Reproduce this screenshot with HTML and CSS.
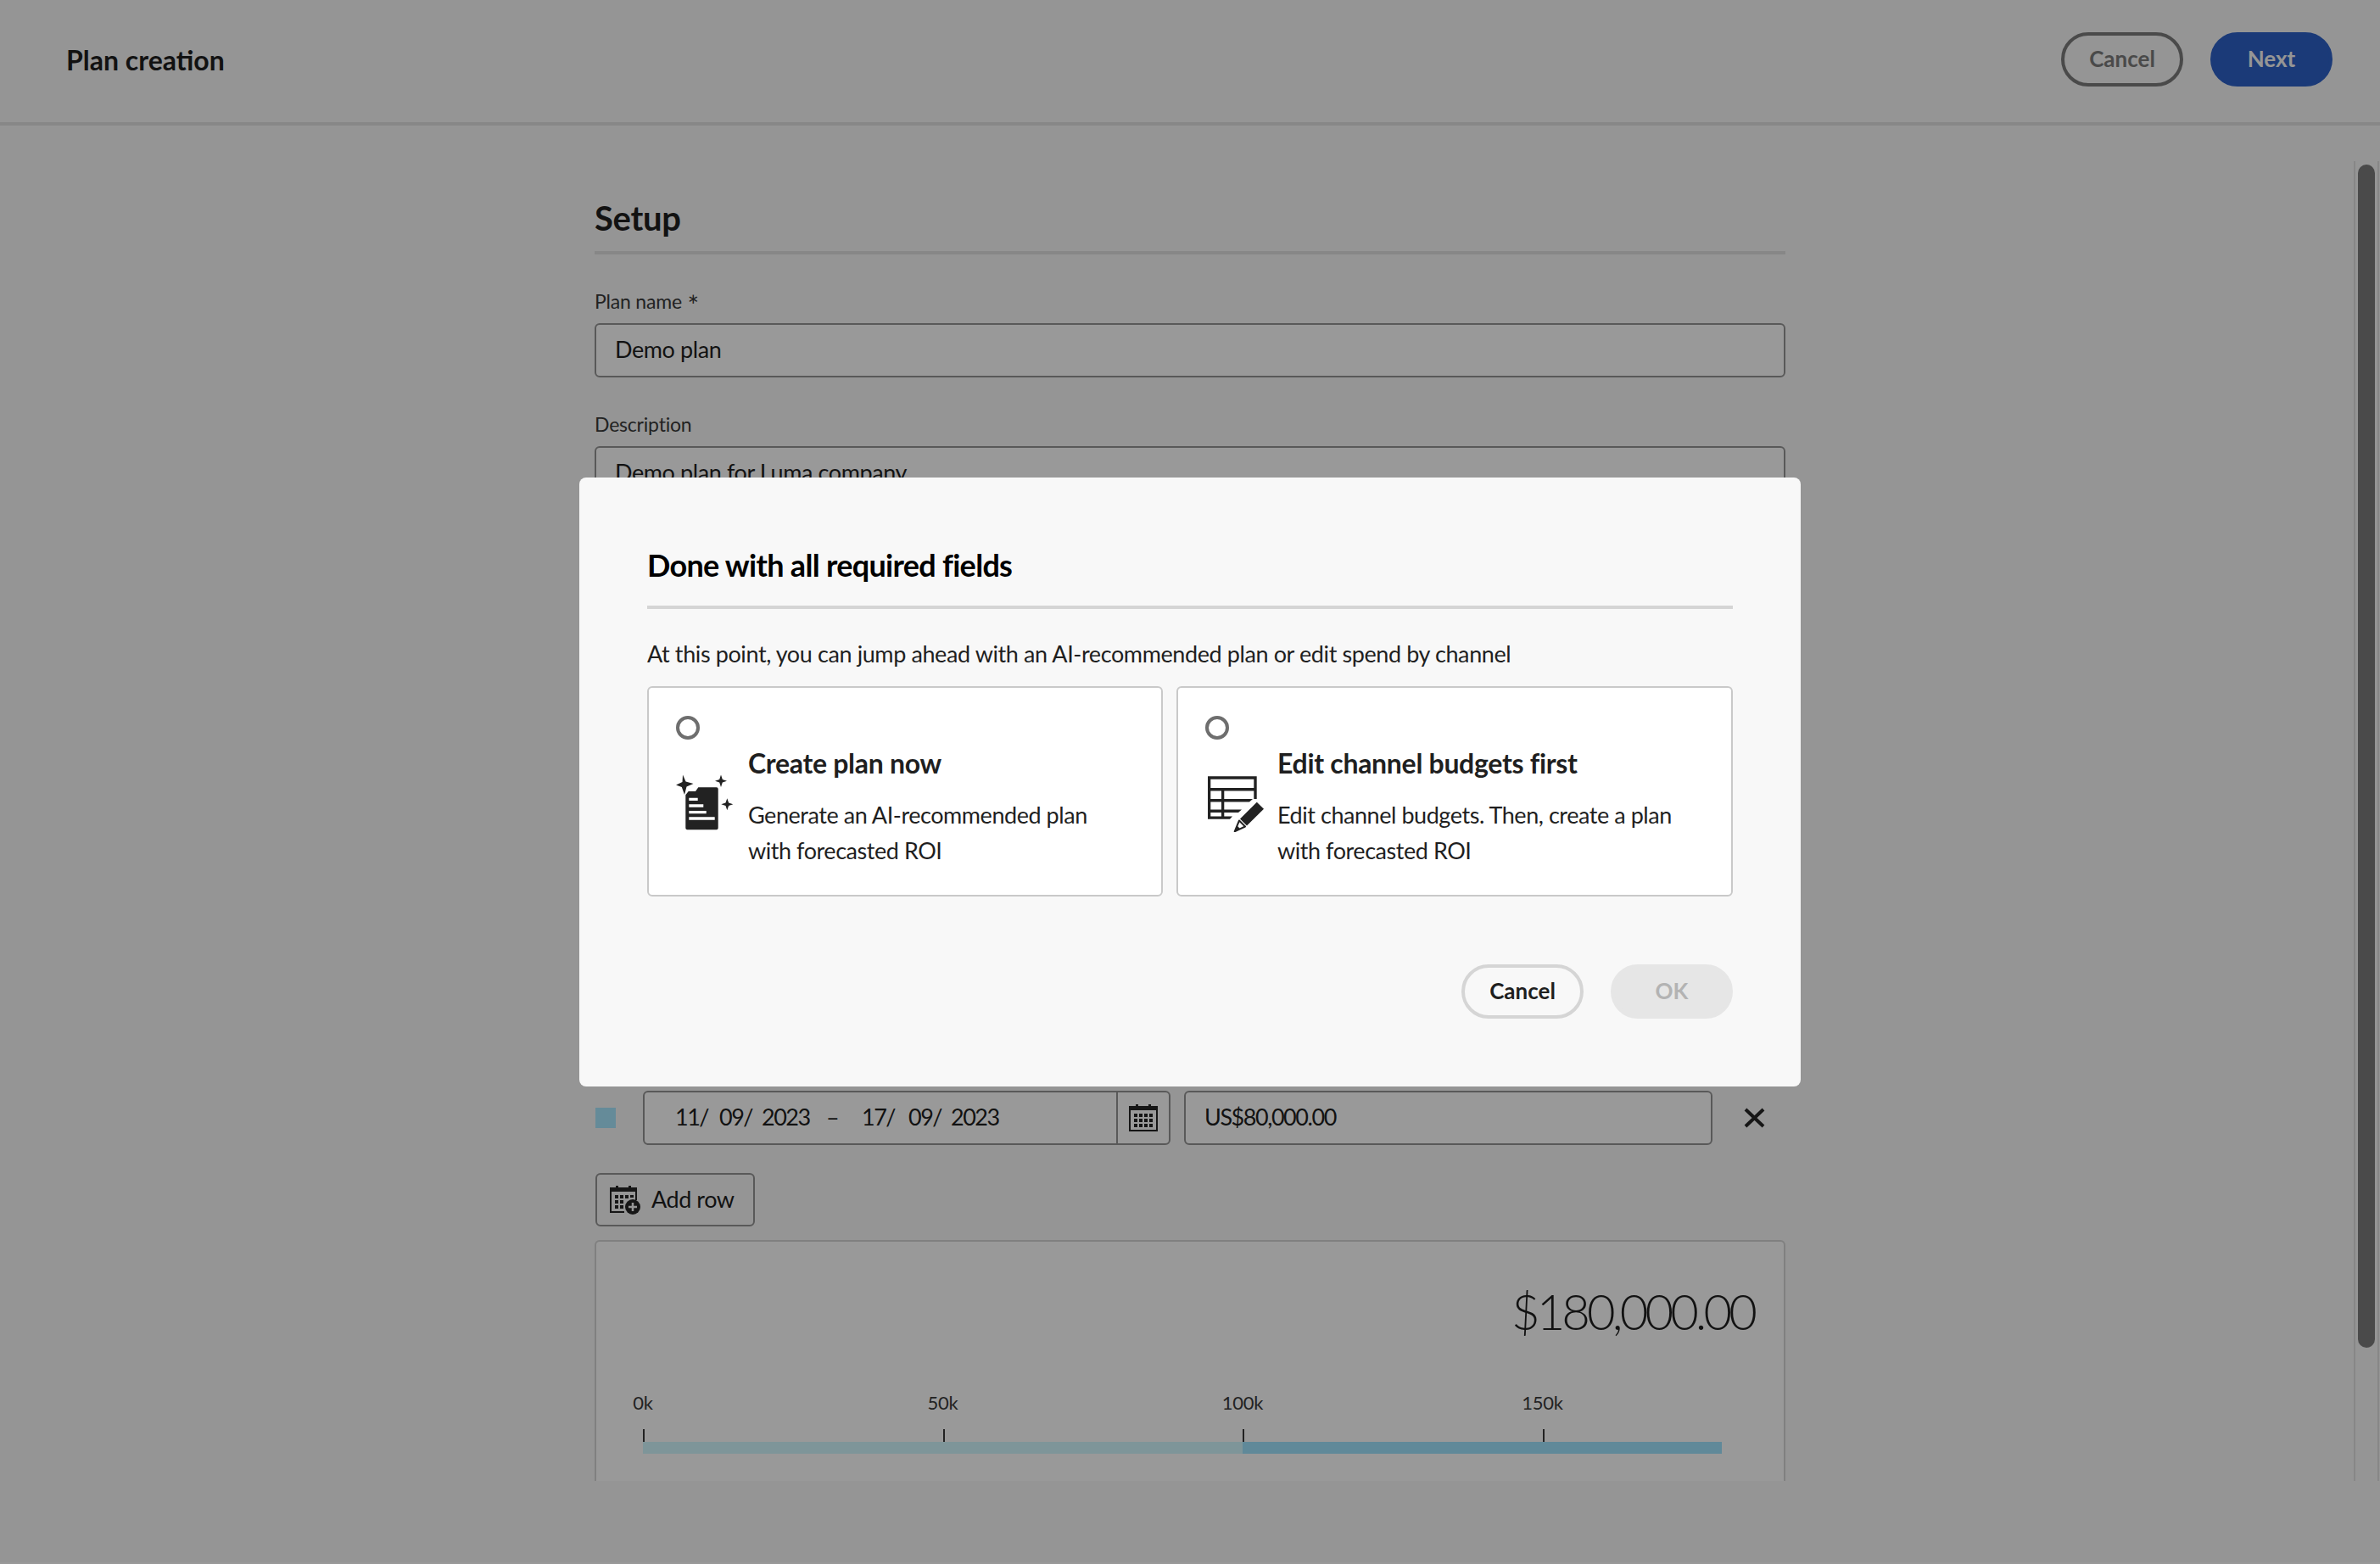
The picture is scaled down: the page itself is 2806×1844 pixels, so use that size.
FILE: index.html
```html
<!DOCTYPE html>
<html lang="en">
<head>
    <meta charset="UTF-8">
    <title>Plan creation</title>
    <link rel="stylesheet" href="styles.css">
</head>
<body>
    <div class="app">
        <header class="top-bar">
            <div class="top-title">Plan creation</div>
            <div class="top-actions">
                <button class="btn btn-outline-dark">Cancel</button>
                <button class="btn btn-primary">Next</button>
            </div>
        </header>
        <main class="scroll-area">
            <div class="setup">
                <h2 class="setup-title">Setup</h2>
                <div class="field-label first-label">Plan name <span class="required">*</span></div>
                <div class="input">Demo plan</div>
                <div class="field-label second-label">Description</div>
                <div class="input">Demo plan for Luma company</div>

                <!-- this row sits right under the dialog -->
                <div class="flight-row">
                    <span class="swatch"></span>
                    <div class="input date-input">
                        <div class="date-text">
                            <span class="d-day">11/</span>
                            <span class="d-month">09/</span>
                            <span class="d-year">2023</span>
                            <span class="d-dash">–</span>
                            <span class="d-day2">17/</span>
                            <span class="d-month">09/</span>
                            <span class="d-year">2023</span>
                        </div>
                        <div class="date-btn">
                            <svg class="cal-icon" viewBox="0 0 34 32">
                                <path d="M8 0h3v5H8zM23 0h3v5h-3z" fill="#262626"/>
                                <rect x="1" y="3" width="32" height="28" fill="none" stroke="#262626" stroke-width="2"/>
                                <rect x="1" y="4" width="32" height="3" fill="#262626"/>
                                <path d="M6 11h4v4H6zM12 11h4v4h-4zM18 11h4v4h-4zM24 11h4v4h-4zM6 17h4v4H6zM12 17h4v4h-4zM18 17h4v4h-4zM24 17h4v4h-4zM6 23h4v4H6zM12 23h4v4h-4zM18 23h4v4h-4zM24 23h4v4h-4z" fill="#262626"/>
                            </svg>
                        </div>
                    </div>
                    <div class="input amount-input">US$80,000.00</div>
                    <svg class="remove-icon" viewBox="0 0 25 24">
                        <path d="M2 2l21 20M23 2L2 22" stroke="#262626" stroke-width="4" fill="none"/>
                    </svg>
                </div>

                <button class="add-row">
                    <svg class="add-icon" viewBox="0 0 36 34">
                        <path d="M7 0h3v5H7zM22 0h3v5h-3z" fill="#262626"/>
                        <path d="M17 31H1V3h30v14" fill="none" stroke="#262626" stroke-width="2"/>
                        <rect x="1" y="4" width="30" height="3" fill="#262626"/>
                        <path d="M6 11h4v4H6zM12 11h4v4h-4zM18 11h4v4h-4zM24 11h4v3h-4zM6 17h4v4H6zM12 17h4v4h-4zM6 23h4v4H6zM12 23h4v4h-4z" fill="#262626"/>
                        <circle cx="27" cy="25" r="9" fill="#262626"/>
                        <path d="M27 20v10M22 25h10" stroke="#f8f8f8" stroke-width="2.5"/>
                    </svg>
                    Add row
                </button>

                <section class="summary">
                    <div class="total">$180,000.00</div>
                    <div class="axis">
                        <div class="tick"><span class="tick-label">0k</span><span class="tick-mark"></span></div>
                        <div class="tick"><span class="tick-label">50k</span><span class="tick-mark"></span></div>
                        <div class="tick"><span class="tick-label">100k</span><span class="tick-mark"></span></div>
                        <div class="tick"><span class="tick-label">150k</span><span class="tick-mark"></span></div>
                    </div>
                    <div class="bar">
                        <div class="bar-light"></div>
                        <div class="bar-dark"></div>
                    </div>
                </section>
            </div>
            <div class="scrollbar"><div class="scroll-thumb"></div></div>
        </main>
    </div>

    <div class="scrim">
        <div class="dialog">
            <h3 class="dialog-title">Done with all required fields</h3>
            <p class="dialog-text">At this point, you can jump ahead with an AI-recommended plan or edit spend by channel</p>
            <div class="choices">
                <div class="choice choice-left">
                    <span class="radio"></span>
                    <div class="choice-body">
                        <svg class="choice-icon" viewBox="0 0 68 66">
                            <path d="M11.3 65.3V24.3L14.7 20H23L26.3 15.3H47.7Q49.7 15.3 49.7 17.3V63.3Q49.7 65.3 47.7 65.3H13.3Q11.3 65.3 11.3 63.3Z" fill="#222"/>
                            <path d="M15.3 27.7H25.7V31H15.3ZM15.3 35.3H32.3V38.7H15.3ZM15.3 43H35.7V46.3H15.3ZM15.3 50.3H45.7V53.7H15.3Z" fill="#fff"/>
                            <path d="M8 0.5L11.5 8.5L20.5 11L12.5 14.5L10 24L6.8 15L0 12.5L7.5 9Z" fill="#222"/>
                            <path d="M53 0.5L54.8 6L60 7.7L54.8 9.5L53 15L51.2 9.5L46 7.7L51.2 6Z" fill="#222"/>
                            <path d="M60.3 28.3L62.1 33.5L67.3 35.3L62.1 37.1L60.3 42.3L58.5 37.1L53.3 35.3L58.5 33.5Z" fill="#222"/>
                        </svg>
                        <div class="choice-copy">
                            <div class="choice-title">Create plan now</div>
                            <div class="choice-desc">Generate an AI-recommended plan<br>with forecasted ROI</div>
                        </div>
                    </div>
                </div>
                <div class="choice choice-right">
                    <span class="radio"></span>
                    <div class="choice-body">
                        <svg class="choice-icon icon-table" viewBox="0 0 68 66">
                            <path d="M1 0.3H58.7V3.7H1ZM1 14H58.7V17.4H1ZM55.3 0.3H58.7V27H55.3ZM1 0.3H4.3V50.7H1ZM17 14H20.3V50.7H17ZM1 27H54L50 30.4H1ZM1 39.5H41L37 43H1ZM1 47.4H30L27 50.7H1Z" fill="#222"/>
                            <path d="M58.8 30.8L67 38.7L47 58.5L39 50.5Z" fill="#222"/>
                            <path d="M38 52.5L45 59.5L32.7 65.3Z" fill="#fff" stroke="#222" stroke-width="2" stroke-linejoin="round"/>
                            <path d="M35.5 58.5L38.8 61.8L32.7 65.3Z" fill="#222"/>
                        </svg>
                        <div class="choice-copy">
                            <div class="choice-title">Edit channel budgets first</div>
                            <div class="choice-desc">Edit channel budgets. Then, create a plan<br>with forecasted ROI</div>
                        </div>
                    </div>
                </div>
            </div>
            <div class="dialog-actions">
                <button class="btn btn-outline">Cancel</button>
                <button class="btn btn-disabled">OK</button>
            </div>
        </div>
    </div>
</body>
</html>
```

FILE: styles.css
```css
* {
    box-sizing: border-box;
}
body {
    margin: 0;
    background-color: #f8f8f8;
    font-family: Lato, "Open Sans", sans-serif;
    color: #1f1f1f;
}
.app {
    height: 1844px;
    display: flex;
    flex-direction: column;
    border-bottom: 2px solid #ffffff;
    overflow: hidden;
}
.top-bar {
    flex: none;
    height: 148px;
    border-bottom: 4px solid #e1e1e1;
    display: flex;
    align-items: flex-start;
    justify-content: space-between;
    padding: 38px 56px 0 78px;
}
.top-title {
    font-size: 32px;
    font-weight: 700;
    line-height: 66px;
}
.top-actions {
    display: flex;
    gap: 32px;
}
.btn {
    width: 144px;
    height: 64px;
    border-radius: 32px;
    border: 4px solid transparent;
    font-family: inherit;
    font-size: 26px;
    font-weight: 700;
    padding: 0 0 3px;
    background: none;
}
.btn-primary {
    background-color: #2d62c8;
    border-color: #2d62c8;
    color: #f8f8f8;
}
.btn-outline-dark {
    border-color: #7c7c7c;
    color: #7c7c7c;
}
.btn-outline {
    border-color: #d5d5d5;
    color: #1f1f1f;
}
.btn-disabled {
    background-color: #e6e6e6;
    border-color: #e6e6e6;
    color: #b3b3b3;
}
.scroll-area {
    flex: none;
    height: 1598px;
    position: relative;
    overflow: hidden;
}
.setup {
    width: 1404px;
    margin: 0 auto;
    padding-top: 78px;
}
.setup-title {
    margin: 0;
    font-size: 40px;
    line-height: 63px;
    font-weight: 700;
    height: 74px;
    letter-spacing: -0.3px;
    border-bottom: 4px solid #e1e1e1;
}
.field-label {
    font-size: 23px;
    line-height: 32px;
    letter-spacing: -0.2px;
    color: #3a3a3a;
}
.first-label {
    margin-top: 39px;
    margin-bottom: 9px;
}
.second-label {
    margin-top: 39px;
    margin-bottom: 10px;
}
.required {
    font-size: 32px;
    line-height: 24px;
    margin-left: 1px;
    vertical-align: -8px;
}
.input {
    height: 64px;
    border: 2px solid #959595;
    border-radius: 6px;
    background-color: #ffffff;
    font-size: 27px;
    letter-spacing: -0.4px;
    line-height: 58px;
    padding-left: 22px;
}
.flight-row {
    margin-top: 696px;
    padding-left: 1px;
    display: flex;
    align-items: center;
}
.swatch {
    width: 24px;
    height: 24px;
    background-color: #a8e8ff;
    margin-right: 32px;
}
.date-input {
    width: 622px;
    padding-left: 0;
    display: flex;
    justify-content: space-between;
    letter-spacing: -1.5px;
}
.date-text {
    display: flex;
    padding-left: 36px;
    white-space: nowrap;
}
.d-day {
    width: 52px;
}
.d-month {
    width: 50px;
}
.d-year {
    width: 76px;
}
.d-dash {
    width: 42px;
}
.d-day2 {
    width: 55px;
}
.date-btn {
    width: 62px;
    border-left: 2px solid #959595;
    display: flex;
    align-items: center;
    justify-content: center;
}
.cal-icon {
    width: 34px;
    height: 32px;
}
.amount-input {
    width: 623px;
    margin-left: 16px;
    letter-spacing: -1.45px;
}
.remove-icon {
    width: 25px;
    height: 24px;
    margin-left: 37px;
}
.add-row {
    display: flex;
    align-items: center;
    width: 188px;
    height: 63px;
    margin: 33px 0 0 1px;
    padding: 0 0 3px 15px;
    border: 2px solid #959595;
    border-radius: 6px;
    background-color: #f8f8f8;
    font-family: inherit;
    font-size: 27px;
    letter-spacing: -0.45px;
    color: #1f1f1f;
}
.add-icon {
    width: 36px;
    height: 34px;
    margin: 3px 13px 0 0;
}
.summary {
    margin-top: 16px;
    height: 340px;
    border: 2px solid #d5d5d5;
    border-radius: 6px;
    background-color: #ffffff;
    padding: 42px 35px 0 55px;
}
.total {
    text-align: right;
    font-size: 58px;
    line-height: 80px;
    font-weight: 300;
    letter-spacing: -3.9px;
}
.axis {
    display: flex;
    margin-top: 52px;
}
.tick {
    flex: none;
    width: 353.5px;
    display: flex;
    flex-direction: column;
    align-items: flex-start;
}
.tick-label {
    font-size: 22px;
    line-height: 32px;
    letter-spacing: -0.3px;
    transform: translateX(-50%);
    color: #3a3a3a;
}
.tick-mark {
    width: 2px;
    height: 15px;
    margin-top: 15px;
    background-color: #3a3a3a;
}
.bar {
    display: flex;
    height: 14px;
    width: 1272px;
}
.bar-light {
    width: 707px;
    background-color: #d2f8ff;
}
.bar-dark {
    flex: 1;
    background-color: #a0e4ff;
}
.scrollbar {
    position: absolute;
    top: 42px;
    bottom: 0;
    left: 2775px;
    width: 30px;
    border-left: 2px solid #e1e1e1;
    border-right: 2px solid #e1e1e1;
}
.scroll-thumb {
    width: 20px;
    height: 1395px;
    margin: 4px 0 0 3px;
    border-radius: 10px;
    background-color: #7c7c7c;
}

.scrim {
    position: fixed;
    top: 0;
    left: 0;
    width: 100%;
    height: 100%;
    background-color: rgba(0, 0, 0, 0.4);
    display: flex;
    align-items: center;
    justify-content: center;
}
.dialog {
    width: 1440px;
    height: 718px;
    background-color: #f8f8f8;
    border-radius: 8px;
    padding: 78px 80px 0;
}
.dialog-title {
    margin: 0;
    height: 77px;
    font-size: 36px;
    line-height: 50px;
    font-weight: 700;
    letter-spacing: -0.7px;
    color: #000000;
    border-bottom: 4px solid #d5d5d5;
}
.dialog-text {
    margin: 32px 0 0;
    font-size: 27px;
    letter-spacing: -0.4px;
    line-height: 42px;
}
.choices {
    display: flex;
    gap: 16px;
    margin-top: 17px;
}
.choice {
    height: 248px;
    background-color: #ffffff;
    border: 2px solid #c9c9c9;
    border-radius: 6px;
    padding: 33px 0 0 32px;
}
.choice-left {
    width: 608px;
}
.choice-right {
    width: 656px;
}
.radio {
    display: block;
    width: 28px;
    height: 28px;
    border: 4px solid #6e6e6e;
    border-radius: 50%;
}
.choice-body {
    display: flex;
    align-items: flex-start;
    gap: 17px;
    margin-top: 6px;
}
.choice-icon {
    width: 68px;
    height: 66px;
    margin-top: 35px;
    flex: none;
}
.icon-table {
    margin: 37px -2px 0 2px;
}
.choice-title {
    font-size: 32px;
    line-height: 44px;
    font-weight: 700;
    letter-spacing: -0.3px;
}
.choice-desc {
    margin-top: 18px;
    font-size: 27px;
    letter-spacing: -0.45px;
    line-height: 42px;
}
.dialog-actions {
    display: flex;
    justify-content: flex-end;
    gap: 32px;
    margin-top: 80px;
}
```
